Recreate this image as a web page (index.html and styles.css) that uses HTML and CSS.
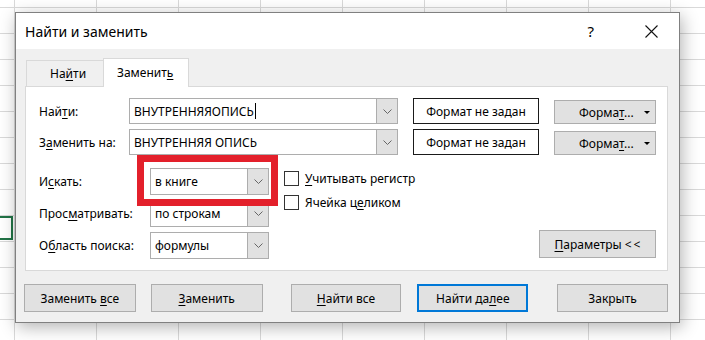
FILE: index.html
```html
<!DOCTYPE html>
<html lang="ru">
<head>
<meta charset="utf-8">
<title>Найти и заменить</title>
<link rel="stylesheet" href="styles.css">
</head>
<body>
<div class="sel-cell"></div>
<div class="dialog">
  <div class="titlebar">
    <span class="title">Найти и заменить</span>
    <span class="help">?</span>
    <svg class="close" width="13" height="13" viewBox="0 0 13 13"><path d="M0.5 0.5L12.5 12.5M12.5 0.5L0.5 12.5" stroke="#111" stroke-width="1.1" fill="none"/></svg>
  </div>
  <div class="dbody">
    <div class="tabs">
      <div class="tab"><span>На<u>й</u>ти</span></div>
      <div class="tab active"><span>Заменит<u>ь</u></span></div>
    </div>
    <div class="panel">
      <div class="row">
        <span class="lbl lbl-top"><span>Най<u>т</u>и:</span></span>
        <div class="combo combo-wide">
          <span class="val">ВНУТРЕННЯЯОПИСЬ<span class="caret"></span></span>
          <span class="arrow"><svg width="9" height="5" viewBox="0 0 9 5"><path d="M0.5 0.5L4.5 4.5L8.5 0.5" stroke="#666" fill="none"/></svg></span>
        </div>
        <div class="fmtbox">Формат не задан</div>
        <div class="btn fmtbtn"><span>Форма<u>т</u>...</span><span class="tri"></span></div>
      </div>
      <div class="row row2">
        <span class="lbl lbl-top"><span>З<u>а</u>менить на:</span></span>
        <div class="combo combo-wide">
          <span class="val">ВНУТРЕННЯЯ ОПИСЬ</span>
          <span class="arrow"><svg width="9" height="5" viewBox="0 0 9 5"><path d="M0.5 0.5L4.5 4.5L8.5 0.5" stroke="#666" fill="none"/></svg></span>
        </div>
        <div class="fmtbox">Формат не задан</div>
        <div class="btn fmtbtn"><span>Форма<u>т</u>...</span><span class="tri"></span></div>
      </div>
      <div class="lower">
        <div class="opts">
          <div class="opt">
            <span class="lbl lbl-opt"><span>И<u>с</u>кать:</span></span>
            <div class="combo combo-small">
              <span class="val">в книге</span>
              <span class="arrow"><svg width="9" height="5" viewBox="0 0 9 5"><path d="M0.5 0.5L4.5 4.5L8.5 0.5" stroke="#666" fill="none"/></svg></span>
            </div>
          </div>
          <div class="opt">
            <span class="lbl lbl-opt"><span>Прос<u>м</u>атривать:</span></span>
            <div class="combo combo-small">
              <span class="val">по строкам</span>
              <span class="arrow"><svg width="9" height="5" viewBox="0 0 9 5"><path d="M0.5 0.5L4.5 4.5L8.5 0.5" stroke="#666" fill="none"/></svg></span>
            </div>
          </div>
          <div class="opt">
            <span class="lbl lbl-opt"><span>О<u>б</u>ласть поиска:</span></span>
            <div class="combo combo-small">
              <span class="val">формулы</span>
              <span class="arrow"><svg width="9" height="5" viewBox="0 0 9 5"><path d="M0.5 0.5L4.5 4.5L8.5 0.5" stroke="#666" fill="none"/></svg></span>
            </div>
          </div>
        </div>
        <div class="checks">
          <label class="check"><span class="box"></span><span><u>У</u>читывать регистр</span></label>
          <label class="check"><span class="box"></span><span>Ячейка ц<u>е</u>ликом</span></label>
        </div>
        <div class="btn params"><span><u>П</u>араметры &lt;&#8201;&lt;</span></div>
      </div>
      <div class="highlight"></div>
    </div>
    <div class="buttons">
      <div class="btn bb b1"><span>Заменить <u>в</u>се</span></div>
      <div class="btn bb b2"><span><u>З</u>аменить</span></div>
      <div class="btn bb b3"><span><u>Н</u>айти все</span></div>
      <div class="btn bb b4 default"><span>Найти да<u>л</u>ее</span></div>
      <div class="btn bb b5"><span>Закрыть</span></div>
    </div>
  </div>
</div>
</body>
</html>
```

FILE: styles.css
```css
* { box-sizing: border-box; }
html, body { margin: 0; }
body {
  position: relative;
  width: 705px;
  height: 340px;
  overflow: hidden;
  padding: 12px 0 0 15px;
  font-family: "Noto Sans", "Open Sans", sans-serif;
  font-size: 12px;
  color: #000;
  background-color: #fff;
  background-image:
    linear-gradient(to right, #d9d9d9 1px, transparent 1px),
    linear-gradient(to bottom, #d9d9d9 1px, transparent 1px);
  background-size: 82px 100%, 100% 26px;
  background-position: 14px 0, 0 7px;
}
u { text-decoration: underline; text-underline-offset: 2px; }

.sel-cell {
  position: absolute;
  left: -4px;
  top: 216px;
  width: 17px;
  height: 24px;
  border: 2px solid #217346;
}

.dialog {
  width: 665px;
  height: 311px;
  border: 1px solid #808080;
  background: #f0f0f0;
  box-shadow: 2px 4px 16px rgba(0, 0, 0, 0.3);
  display: flex;
  flex-direction: column;
  position: relative;
}
.titlebar {
  height: 36px;
  flex: none;
  background: #fff;
  display: flex;
  align-items: center;
  padding-left: 9px;
}
.title { font-size: 14px; flex: 1; }
.help { font-size: 15px; margin-right: 51px; }
.close { margin-right: 21px; }

.dbody {
  flex: 1;
  padding: 9px 11px 0 9px;
  display: flex;
  flex-direction: column;
}
.tabs {
  display: flex;
  align-items: flex-end;
  height: 28px;
  padding-left: 1px;
  position: relative;
  z-index: 2;
}
.tab {
  height: 26px;
  width: 78px;
  border: 1px solid #d9d9d9;
  border-bottom: none;
  padding-left: 23px;
  display: flex;
  align-items: center;
  background: #f0f0f0;
}
.tab.active {
  height: 29px;
  width: 86px;
  margin-bottom: -1px;
  margin-left: -1px;
  background: #fff;
  padding-left: 13px;
  padding-bottom: 2px;
}

.panel {
  position: relative;
  height: 185px;
  flex: none;
  background: #fff;
  border: 1px solid #d9d9d9;
  padding: 11px 0 0 13px;
}
.row { display: flex; align-items: stretch; height: 26px; }
.row2 { margin-top: 5px; }
.lbl { display: flex; align-items: center; }
.lbl-top { width: 90px; }

.combo {
  display: flex;
  border: 1px solid #adadad;
  background: #fff;
}
.combo-wide { width: 269px; }
.val {
  flex: 1;
  padding-left: 4px;
  display: flex;
  align-items: center;
  white-space: pre;
}
.caret {
  display: inline-block;
  width: 1px;
  height: 16px;
  background: #000;
  margin-left: 1px;
}
.arrow {
  width: 21px;
  flex: none;
  background: #e1e1e1;
  border-left: 1px solid #adadad;
  display: flex;
  align-items: center;
  justify-content: center;
}
.fmtbox {
  margin-left: 15px;
  width: 126px;
  border: 1px solid #1a1a1a;
  display: flex;
  align-items: center;
  justify-content: center;
}
.btn {
  background: #e1e1e1;
  border: 1px solid #adadad;
  display: flex;
  align-items: center;
  justify-content: center;
  white-space: nowrap;
}
.fmtbtn {
  margin-left: 15px;
  width: 102px;
  height: 24px;
  align-self: flex-end;
  justify-content: flex-start;
  padding-left: 24px;
}
.tri {
  margin-left: auto;
  margin-right: 5px;
  width: 0;
  height: 0;
  border-left: 3px solid transparent;
  border-right: 3px solid transparent;
  border-top: 3px solid #000;
}

.lower {
  display: flex;
  margin-top: 13px;
  padding-right: 11px;
}
.opts { display: flex; flex-direction: column; gap: 5px; }
.opt { display: flex; height: 27px; }
.lbl-opt { width: 111px; }
.combo-small { width: 119px; }
.checks {
  margin-left: 15px;
  padding-top: 3px;
  display: flex;
  flex-direction: column;
  gap: 9px;
}
.check { display: flex; align-items: center; gap: 6px; height: 15px; }
.box {
  width: 15px;
  height: 15px;
  border: 1px solid #333;
  background: #fff;
}
.params {
  margin-left: auto;
  align-self: flex-end;
  width: 117px;
  height: 28px;
  margin-bottom: 1px;
}

.highlight {
  position: absolute;
  left: 111px;
  top: 68px;
  width: 141px;
  height: 51px;
  border: 7px solid #e3202b;
}

.buttons {
  display: flex;
  margin-top: 13px;
  margin-left: -1px;
}
.bb { height: 28px; width: 112px; }
.b2 { margin-left: 15px; }
.b3 { margin-left: 28px; width: 111px; }
.b4 { margin-left: 16px; width: 111px; }
.b5 { margin-left: 29px; width: 111px; }
.default { border: 2px solid #0078d7; }
```
